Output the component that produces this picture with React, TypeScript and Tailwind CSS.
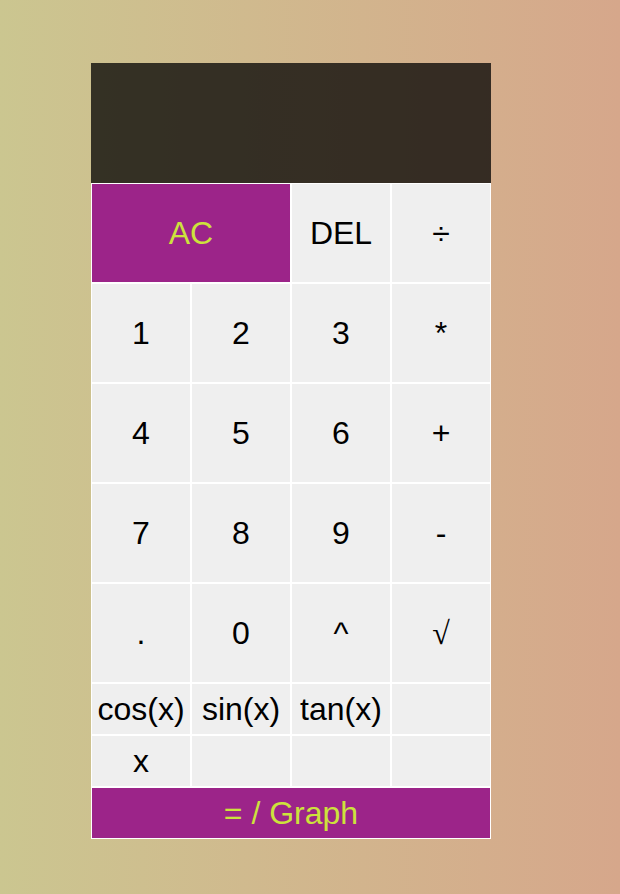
import React from "react";

const cell =
  "flex items-center justify-center border border-white bg-[#efefef] text-black";

export default function App() {
  const rows: string[][] = [
    ["1", "2", "3", "*"],
    ["4", "5", "6", "+"],
    ["7", "8", "9", "-"],
  ];
  return (
    <div
      className="min-h-[894px] w-full bg-gradient-to-r from-[#cbc690] to-[#d6a78b] pt-[63px] pl-[91px]"
      style={{ fontFamily: '"Liberation Sans", Arial, sans-serif' }}
    >
      <div className="w-[400px]">
        <div className="h-[120px] bg-black/75" />
        <div className="grid grid-cols-4 text-[32px]">
          <div className="col-span-2 flex h-[100px] items-center justify-center border border-white bg-[#9c2489] text-[#cde23c]">
            AC
          </div>
          <div className={`${cell} h-[100px]`}>DEL</div>
          <div className={`${cell} h-[100px]`}>÷</div>
          {rows.flat().map((k, i) => (
            <div key={i} className={`${cell} h-[100px]`}>
              {k}
            </div>
          ))}
          <div className={`${cell} h-[100px]`}>.</div>
          <div className={`${cell} h-[100px]`}>0</div>
          <div className={`${cell} h-[100px]`}>^</div>
          <div className={`${cell} h-[100px] font-['Liberation_Serif',serif]`}>√</div>
          <div className={`${cell} h-[52px] leading-none`}>cos(x)</div>
          <div className={`${cell} h-[52px] leading-none`}>sin(x)</div>
          <div className={`${cell} h-[52px] leading-none`}>tan(x)</div>
          <div className={`${cell} h-[52px]`} />
          <div className={`${cell} h-[52px] leading-none`}>x</div>
          <div className={`${cell} h-[52px]`} />
          <div className={`${cell} h-[52px]`} />
          <div className={`${cell} h-[52px]`} />
          <div className="col-span-4 flex h-[52px] items-center justify-center border border-white bg-[#9c2489] text-[#cde23c]">
            = / Graph
          </div>
        </div>
      </div>
    </div>
  );
}
